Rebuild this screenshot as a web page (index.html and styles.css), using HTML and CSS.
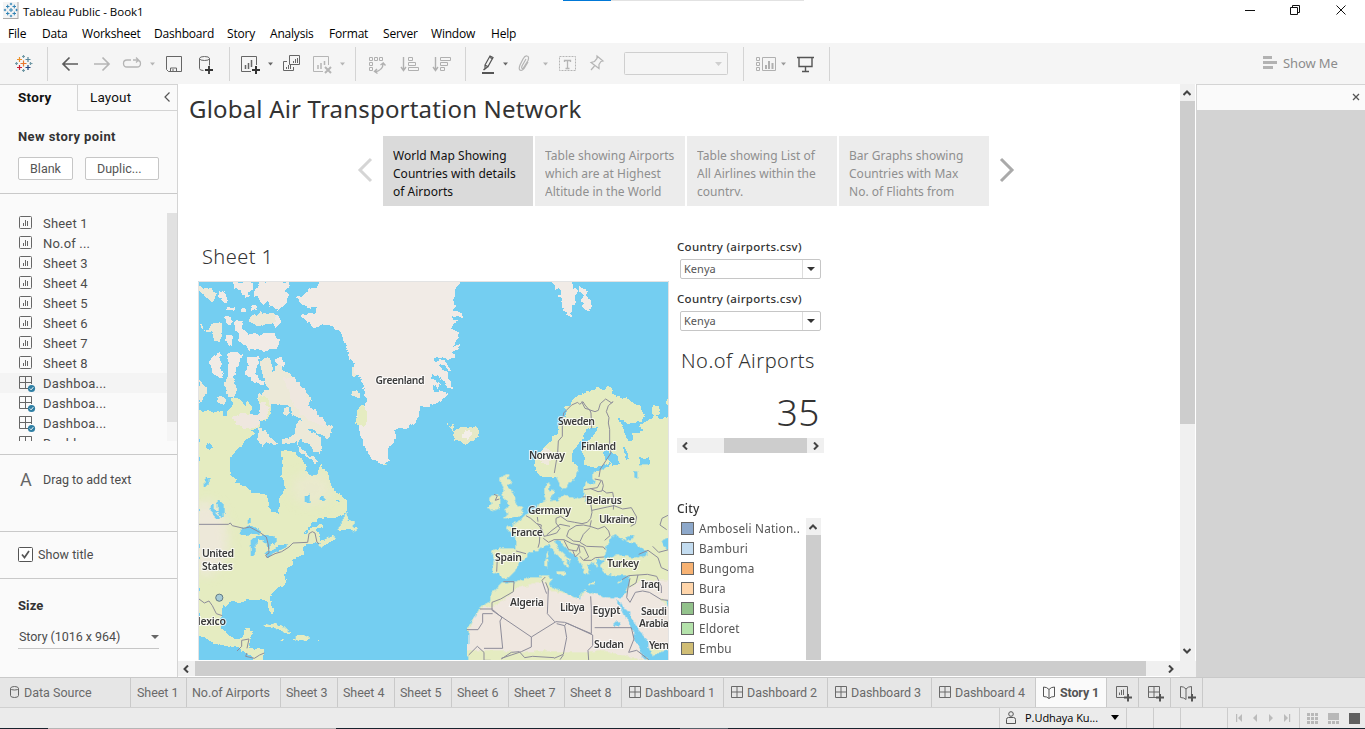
FILE: index.html
```html
<!DOCTYPE html>
<html lang="en">
<head>
<meta charset="utf-8">
<title>Tableau Public - Book1</title>
<link rel="stylesheet" href="styles.css">
</head>
<body>
<svg class="defs" width="0" height="0">
  <defs>
    <symbol id="sheet" viewBox="0 0 14 14"><rect x=".5" y=".5" width="12" height="12" rx="1" fill="none" stroke="currentColor"/><path d="M4.500 7v3M6.500 4v6M8.500 5v5" stroke="currentColor" fill="none"/></symbol>
    <symbol id="grid" viewBox="0 0 14 14"><path d="M.5 .5h11v11H.5zM6 .5v11M.5 6h11" stroke="currentColor" fill="none"/></symbol>
    <symbol id="griddone" viewBox="0 0 17 17"><path d="M9 12.500H.5V.5h12V8M6.500 .5v12M.5 6.500h12" stroke="#666" fill="none"/><circle cx="12.500" cy="12.500" r="3.600" fill="#2e7ea3"/><path d="m10.800 12.500 1.300 1.300 2.200-2.600" stroke="#fff" fill="none"/></symbol>
    <symbol id="book" viewBox="0 0 14 14"><path d="M6 3.500Q4 1 .5 1v9.500q3.500 0 5.500 2 2-2 5.500-2V1Q8 1 6 3.500v9" fill="none" stroke="currentColor"/></symbol>
    <symbol id="chev" viewBox="0 0 8 8"><path d="M6 .5 2.500 4 6 7.500" fill="none" stroke="#444" stroke-width="2"/></symbol>
  </defs>
</svg>
<div class="app">
  <header class="titlebar">
    <div class="progress"></div>
    <svg class="applogo" width="16" height="18" viewBox="0 0 16 18"><rect x="0" y="1" width="15" height="16" fill="#f4f4f4"/><path d="M15 1v17M0 17.500h15" stroke="#aaa" fill="none"/><path d="M6 9h4M8 7v4M3 5.500h3.500M4.700 3.700v3.600M9.500 5.500H13M11.300 3.700v3.600M3 12.500h3.500M4.700 10.700v3.600M9.500 12.500H13M11.300 10.700v3.600M6.800 3h2.400M8 1.800v2.400M6.800 15h2.400M8 13.800v2.400M.8 9h2.400M2 7.800v2.400M12.500 9h2.200M13.500 7.800v2.400" stroke="#3284b5" fill="none"/></svg>
    <span class="wintitle">Tableau Public - Book1</span>
    <svg class="winctl" width="120" height="22" viewBox="1240 0 120 22"><path d="M1245 10.500h10M1290.500 7.500h7v7h-7zM1292.500 7.500v-2h7v7h-2M1336.500 5.500l9 9M1345.500 5.500l-9 9" fill="none" stroke="#111"/></svg>
  </header>
  <nav class="menu"><span class="m1">File</span><span class="m2">Data</span><span class="m3">Worksheet</span><span class="m4">Dashboard</span><span class="m5">Story</span><span class="m6">Analysis</span><span class="m7">Format</span><span class="m8">Server</span><span class="m9">Window</span><span>Help</span></nav>
  <div class="toolbar">
    <svg width="48" height="34" viewBox="0 47 48 34"><g fill="none" stroke-width="1.200"><path d="M20.500 63.500h6M23.500 60.500v6" stroke="#e8762d"/><path d="M17 59.500h5M19.500 57v5" stroke="#eb912c"/><path d="M25.500 59.500h5M28 57v5" stroke="#59879b"/><path d="M17 67.500h5M19.500 65v5" stroke="#c72035"/><path d="M25.500 67.500h5M28 65v5" stroke="#1f447e"/><path d="M22 56.500h3M23.500 55v3M15 63.500h3M16.500 62v3M22 70.500h3M23.500 69v3M29.500 63.500h3M30.500 62v3" stroke="#7199a6"/></g></svg>
    <svg class="sep" width="182" height="34" viewBox="48 47 182 34"><g fill="none" stroke="#5c5c5c" stroke-width="1.700"><path d="M78 64H63M69.500 57.500 63 64l6.500 6.500"/><path d="M94 64h15M102.500 57.500 109 64l-6.500 6.500" stroke="#b5b5b5"/></g><path d="M131 60h-4q-3.500 0-3.500 3.500T127 67h10q3.500 0 3.500-3.500 0-3-3.500-3.500h-4M136 57.500l2.500 2.500-2.500 2.500" stroke="#b5b5b5" fill="none" stroke-width="1.300"/><path d="M150 62.500h5l-2.500 3z" fill="#b5b5b5"/><path d="M166.500 56.500h15v15h-13l-2-2zM170.500 71v-3h6v3M173 71v-2" fill="none" stroke="#666"/><g fill="none" stroke="#666"><ellipse cx="204.500" cy="58.500" rx="5" ry="2"/><path d="M199.500 58.500v10q0 2 4 2M209.500 58.500v7"/><path d="M205 70h8M209 66v8" stroke="#333" stroke-width="1.800"/></g></svg>
    <svg class="sep" width="126" height="34" viewBox="230 47 126 34"><g fill="none" stroke="#666"><path d="M251 71.500h-9.500v-15h15V65"/><path d="M245.500 69v-4M248.500 69v-6M251.500 67v-7" stroke-width="1.500"/><path d="M252 70h8M256 66v8" stroke="#333" stroke-width="2"/><path d="M289.500 55.500h10v9h-10zM287 61.500h-3.500v9h10V67M293.500 63v-2M295.500 63v-4M297.500 63v-5M286.500 69v-2M288.500 69v-4M290.500 69v-4"/></g><path d="M268 62.500h5l-2.500 3z" fill="#666"/><g fill="none" stroke="#b5b5b5"><path d="M323 71.500h-9.500v-15h15V65"/><path d="M318 69v-4M321 69v-6M324.500 65v-4" stroke-width="1.500"/><path d="m325 67 6 6M331 67l-6 6" stroke-width="2"/></g><path d="M340 62.500h5l-2.500 3z" fill="#b5b5b5"/></svg>
    <svg class="sep" width="110" height="34" viewBox="356 47 110 34"><g fill="none" stroke="#b0b0b0"><path d="M369.500 57.500h3v3h-3zM374.500 57.500h3v3h-3zM379.500 57.500h3v3h-3zM369.500 62.500h3v3h-3zM369.500 67.500h3v3h-3z"/><path d="M383 64q0 6-8 8M380.500 65l2.700-2 2.300 2.500M377 69l-2.500 2.500 3 2" stroke-width="1.400"/><path d="M403.500 57v13M401 67l2.500 3.500 2.500-3.500M435.500 57v13M433 67l2.500 3.500 2.500-3.500" stroke-width="1.400"/><path d="M408.500 57.500h4v3h-4zM408.500 62.500h7v3h-7zM408.500 67.500h10v3h-10zM440.500 57.500h10v3h-10zM440.500 62.500h7v3h-7zM440.500 67.500h4v3h-4z"/></g></svg>
    <svg class="sep" width="278" height="34" viewBox="466 47 278 34"><path d="M482 73h12" stroke="#555" stroke-width="2"/><path d="m485 65 5-9 3 1.500-5 9-3 2.500zM485 65l3.500 2M490 57.500l3 1.500M483.500 70l2-2" fill="none" stroke="#555" stroke-width="1.200"/><path d="M503 62.500h5l-2.500 3z" fill="#666"/><path d="m526 59-4 7q-1 3 1 2.500l5-8q1.500-4-1-4.500-2-.5-4 3l-3 6q-2 5 1 5.500 2 0 4-3.500l3-5" fill="none" stroke="#b5b5b5" stroke-width="1.200"/><path d="M543 62.500h5l-2.500 3z" fill="#b5b5b5"/><path d="M559.500 56.500h16v14h-16z" fill="none" stroke="#b5b5b5" stroke-dasharray="2 1"/><path d="M564.500 62v-1.500h6V62M567.500 60.500v8M565.500 68.500h4" fill="none" stroke="#b5b5b5" stroke-width="1.300"/><path d="m597 56 6 5-2 .5-2 3v4l-8-6 3.500-1 2.500-3zM594.500 66l-3.500 4" fill="none" stroke="#b5b5b5" stroke-width="1.200"/><rect x="624.500" y="52.500" width="103" height="22" rx="1" fill="none" stroke="#cfcfcf"/><path d="M715 62h7l-3.500 4z" fill="#cfcfcf"/></svg>
    <svg class="sep last" width="85" height="34" viewBox="744 47 85 34"><g fill="none" stroke="#b0b0b0"><path d="M756.500 57.500h3v3h-3zM756.500 62.500h3v3h-3zM756.500 67.500h3v3h-3zM762.500 57.500h13v13h-13z"/><path d="M766 69v-4M769 69v-8M772.500 69v-6" stroke-width="2"/></g><path d="M781 62.500h5l-2.500 3z" fill="#999"/><path d="M797 57.500h17M799 58v8.500h13V58M805.500 67v5M802 71.500h7" fill="none" stroke="#555" stroke-width="1.400"/></svg>
    <div class="showme"><svg width="16" height="16" viewBox="0 0 16 16"><path d="M1 1h9v3H1zM1 6h14v3H1zM1 11h10v3H1z" fill="#b2b2b2"/></svg><span>Show Me</span></div>
  </div>

  <main class="body">
    <aside class="side">
      <div class="sidetabs"><b>Story</b><div class="layout"><span>Layout</span><svg width="8" height="10" viewBox="0 0 8 10"><path d="M6.500 .5 2 5l4.500 4.500" fill="none" stroke="#555" stroke-width="1.200"/></svg></div></div>
      <section class="newpoint"><h3>New story point</h3><div class="btns"><button class="blank">Blank</button><button class="dup">Duplic...</button></div></section>
      <section class="sheets">
        <ul>
          <li><svg><use href="#sheet"/></svg><span>Sheet 1</span></li><li><svg><use href="#sheet"/></svg><span>No.of ...</span></li><li><svg><use href="#sheet"/></svg><span>Sheet 3</span></li><li><svg><use href="#sheet"/></svg><span>Sheet 4</span></li><li><svg><use href="#sheet"/></svg><span>Sheet 5</span></li><li><svg><use href="#sheet"/></svg><span>Sheet 6</span></li><li><svg><use href="#sheet"/></svg><span>Sheet 7</span></li><li><svg><use href="#sheet"/></svg><span>Sheet 8</span></li>
          <li class="dash hot"><svg><use href="#griddone"/></svg><span>Dashboa...</span></li><li class="dash"><svg><use href="#griddone"/></svg><span>Dashboa...</span></li><li class="dash"><svg><use href="#griddone"/></svg><span>Dashboa...</span></li><li class="dash"><svg><use href="#griddone"/></svg><span>Dashboa...</span></li>
        </ul>
        <div class="listbar"></div>
      </section>
      <section class="drag"><span class="bigA">A</span><span>Drag to add text</span></section>
      <section class="showtitle"><svg width="15" height="15" viewBox="0 0 15 15"><rect x=".5" y=".5" width="14" height="14" rx="1" fill="#fff" stroke="#555"/><path d="m4 7.500 2.500 3 4.500-6.500" fill="none" stroke="#555" stroke-width="1.700"/></svg><span>Show title</span></section>
      <section class="size"><h3>Size</h3><div class="sizesel"><span>Story (1016 x 964)</span><i class="tri"></i></div></section>
    </aside>

    <div class="work">
      <div class="canvas">
        <h1>Global Air Transportation Network</h1>
        <div class="points">
          <svg class="prev" width="18" height="26" viewBox="0 0 18 26"><path d="M15 2 4 13l11 11" fill="none" stroke="#d5d5d5" stroke-width="3"/></svg>
          <div class="pt on"><p>World Map Showing<br>Countries with details<br>of Airports</p></div><div class="pt"><p>Table showing Airports<br>which are at Highest<br>Altitude in the World</p></div><div class="pt"><p>Table showing List of<br>All Airlines within the<br>country.</p></div><div class="pt"><p>Bar Graphs showing<br>Countries with Max<br>No. of Flights from</p></div>
          <svg class="next" width="18" height="26" viewBox="0 0 18 26"><path d="M3 2l11 11L3 24" fill="none" stroke="#aaa" stroke-width="3"/></svg>
        </div>
        <div class="dashboard">
          <div class="viz">
            <h2>Sheet 1</h2>
            <svg class="map" width="471" height="379" viewBox="198 281 471 379">
              <defs>
                <filter id="soft" x="-30%" y="-30%" width="160%" height="160%"><feGaussianBlur stdDeviation="16"/></filter>
                <filter id="coast" x="0" y="0" width="100%" height="100%"><feTurbulence type="fractalNoise" baseFrequency=".16" numOctaves="2" seed="4"/><feDisplacementMap in="SourceGraphic" scale="5" xChannelSelector="R" yChannelSelector="G"/></filter>
                <path id="na" d="M12 0H105V30L122 40 124 54 150 62 170 80 200 88 218 90 220 120 230 128 232 140 248 146 252 120 248 100 262 88 272 70 268 40 256 36 262 20 260-20 258-40 270-45 300-35 330-5 335 20 350 32 365 30 372 10 378-5 385 8 400 30 408 60 420 80 440 92 458 108 460 135 445 148 420 158 370 160 345 180 326 205 345 190 380 178 382 188 362 192 370 205 380 222 400 226 416 214 418 220 395 238 375 248 370 240 378 232 355 236 340 236 325 246 325 268 300 280 290 300 275 310 278 325 270 325 272 350 255 366 235 380 225 395 226 408 236 430 236 452 224 440 216 410 205 404 190 402 180 406 150 404 150 412 110 408 90 420 80 440 76 465 82 490 100 510 120 522 140 520 146 500 160 492 176 496 165 520 162 548 180 552 208 553 204 590 178 585 170 570 150 562 130 546 90 546 60 536 30 520 12 510z"/>
                <clipPath id="naclip"><use href="#na"/></clipPath>
              </defs>
              <rect x="198" y="281" width="471" height="379" fill="#74cef1"/>
              <g filter="url(#coast)"><g transform="translate(195 275) scale(.33333)" shape-rendering="crispEdges">
                <g fill="#f1ebe6">
                  <path d="M375 20L367 35 345 45 322 60 306 70 312 82 330 92 345 98 368 95 366 112 345 116 320 122 330 135 345 146 355 160 385 150 410 152 425 162 440 178 448 205 460 225 462 255 476 262 470 290 484 300 500 308 498 325 508 345 518 375 510 392 495 398 484 420 486 448 494 470 502 500 515 525 530 550 550 560 572 574 578 560 580 520 598 500 600 470 612 460 640 458 655 445 672 425 674 395 690 395 712 390 735 378 760 355 735 345 715 352 712 330 730 340 735 325 712 310 712 295 740 310 755 335 770 340 765 310 750 290 735 270 740 262 760 290 768 290 758 268 740 255 720 262 715 252 740 248 755 256 780 252 780 238 768 232 792 222 795 208 775 212 782 200 790 192 790 172 770 160 770 150 788 140 770 125 803 128 800 116 775 105 785 92 772 88 780 60 780 40 795 25 790 15 375 15z"/>
                  <path d="M1072 15L1082 42 1092 40 1096 62 1086 66 1102 68 1098 86 1106 98 1103 108 1114 114 1126 130 1132 100 1138 84 1140 60 1152 50 1134 36 1130 15zM1146 28L1162 40 1172 42 1180 70 1192 94 1184 108 1166 104 1160 94 1170 84 1158 74 1166 58 1156 50z"/>
                  <path d="M114 22L118 40 140 42 138 56 150 58 148 70 162 64 158 50 170 46 172 34 166 20zM190 20L196 32 178 44 176 66 190 60 194 80 206 94 218 78 224 90 236 98 250 108 262 92 276 78 282 56 272 48 284 34 280 20zM225 140L230 118 252 125 256 140 242 155z"/>
                  <path d="M75 46l10 6 12 8 4 18-14 10-10-18-8-4zM90 98l28-2 0 8-28-2zM140 100h9v12h-7zM166 92l18-2 4 14-20 6zM88 126l18 2 10 12-6 4-6 8-12-12zM118 142l12-6 12 4 2 22 10 6 6 12 20-2 16 4 10-8 20 2 14-2 2 12 10 6-6 28-22 4-20 4-14-6-10 4-22-2-14-16-14-14 2-18-12-6zM90 190l12-10 10 10 0 18-12 4-8-10zM98 234l20-4 26 8-6 16-4 18-14 4 2 20-8 8 2 18-18-10 2-40-6-20zM48 248l22-14 12 8-8 8 8 18-4 14 10 8-6 16-8 10-6-8-12-12-4-16-8-4zM160 250l16-8 16 2-4 18-4 36 4 14 20 8-2 12-24-8-8-2-8-14-14-10 0-18zM240 246l18 0 12 22-10 8-14-10-8-8z"/>
                </g>
                <g fill="#ece9d8">
                  <path d="M12 30l10 12 22-4 18 18-8 30-20-20-22-20zM166 122l18-2 16-8 20 8 12-6 10 12-6 22-20-4-12 8-28-2-14-10zM12 140l14 10 2 14 20-4-2-14 32-2-2 56-18-2-6-30-14 6-12-14zM12 310l8 16 18 14-2 16-16 24-8 2zM70 366l10-4 14 10-2 10-10 6-16-6zM98 300L118 318 126 345 118 368 98 360 90 330z"/>
                  <path d="M194 262l12-14 18 2 8 20 0 20 16-18 8-2 14 20 14 0 4 14 14 12 16 12 8 14 8 12 12 8 2 16-12 8 12 14-6 8 14 6 2 14 16 10 14-2 8 14 6-4 14 10-12 18-8 20-12-16-18-2-16-16-16-6-10-12-10-12-22-12-2-16-18-16-22 2 4 8-12-8-20 4-18-10-10 4-8-14 6-16 8 2 6-10 16-4-4-12-10-12z"/>
                  <path d="M310 430l10 18 10-10 16 14-4 14 16 10 20 12 2 32-4 14-18-6-18-20-10-8-6-12-14 4-4 14 14 16 16 4 2 12 18 8 14 14-8 4-24-16-24-20-12-26-20 4-22-2 2-12 26-6 14-12zM190 456l14 14 12-2 10 18 24 20-10 6-18-8-10-2-12 14-14-28zM268 400l14-2 4 12-8 14-10-6zM474 346l10 0 8 10 4 12-12 2-12-8zM470 275L484 300 478 310 468 295z"/>
                </g>
                <path fill="#efe7df" d="M265 310l35 0 30 30 15 60 40 28 5 28-20-8-34-18-36-30-20-50z"/>
                <path fill="#e5ecc1" d="M495 392l16-2 6 20 0 30-14 12-18-4-2-20z"/>
                <path fill="#e6e9c6" d="M755 446l8 8 10-6 4 8-4 10 8 0 10-8 16 2 16-2 16-4 10 6 6 14-6 12-14 8-12 8-16 4-12-8-14-4-8-14 6-10-4-8-16-8z"/>
                <path fill="#f3eee8" d="M800 475l22-10 12 12-14 14-18-2z"/>
                <path fill="#e5ecc1" d="M12 404L50 412 80 408 88 424 100 420 98 408 112 392 108 372 120 366 142 378 150 400 156 376 168 392 166 416 190 420 196 400 190 368 206 360 220 372 226 410 218 432 200 438 190 455 170 464 178 478 160 490 130 520 112 540 105 560V605H12z"/>
                <path fill="#efe7df" d="M112 425L140 415 166 416 190 420 196 385 210 375 222 400 216 430 200 436 185 455 150 462 125 450z"/>
                <g transform="translate(0 570)">
                  <use href="#na" fill="#e5ecc1"/>
                  <g clip-path="url(#naclip)"><g filter="url(#soft)" fill="#efe7df"><ellipse cx="30" cy="220" rx="70" ry="110" opacity=".8"/><ellipse cx="350" cy="70" rx="60" ry="50" opacity=".4"/></g></g>
                  <path fill="#e5ecc1" d="M202 482l14-4 8 6-16 4zM222 478l20-4 22 10 14 12 10 8-18 0-6-8-16-6-14-6-14 2zM306 510h22l16 10-14 8-18-4-8-2zM258 522h8v3h-8zM296 522h8v4h-8zM360 522h10v3h-10zM432 194L442 170 450 148 460 142 456 168 476 172 472 184 488 186 484 200 468 192 450 196zM370 238L392 222 416 212 420 218 396 236 374 250zM568 0h8v4h-8zM312 582h8v4h-8z"/>
                  <path fill="#74cef1" d="M28 48l6-12 12 4-10 22-10 6zM46 120l12 2 2 14 12 4-6-26 4-10 12 8 8 20-4 22-8 4-8-18-6 4 12 16-8 4-16-22-12-12zM156 164l6-6 6 4 0 10-12 4zM130 208L145 190 160 180 175 184 200 200 194 212 178 204 150 210zM172 224L184 216 208 210 240 214 242 234 226 240 224 250 214 240 204 226 188 226 182 250 180 270 168 274 166 250zM208 272L220 262 240 252 246 242 278 238 278 246 250 258 220 276zM328 92l16-4 2 26-16-2zM374 100l10-6 10 12-20 2zM420 110l14-6-2 8z"/>
                </g>
                <path fill="#74cef1" d="M36 510l10-6 8 10-10 12-8-6z"/>
                <g transform="translate(705 0)">
                  <path fill="#e5ecc1" d="M335 605L318 590 315 555 325 535 345 515 360 500 375 480 385 460 395 440 405 415 412 405 400 396 425 390 425 375 445 362 465 355 470 345 490 350 500 335 520 345 535 332 548 345 545 355 570 365 600 375 630 395 642 420 635 440 600 445 570 430 562 430 580 460 585 480 600 500 612 495 605 475 625 475 640 465 630 450 650 440 668 430 672 418 690 432 705 430 725 410V605zM670 395L685 393 690 405 685 422 670 418zM708 375L725 368V392L710 388z"/>
                  <path fill="#74cef1" d="M470 460L500 458 498 475 480 490 465 505 462 520 465 570 490 578 520 570 545 562 522 585 500 590 525 600V610H430L440 575 425 560 425 535 440 510 460 490zM520 530l14-6 12 14 22 8-2 20-18 8-12-16-14-4zM580 515l10 6 2 16 8 14-10 2-8-16zM628 548l26 0 6 14-12 18-22-8z"/>
                  <path fill="#efe9dc" d="M330 530l20-14 14 14-8 40-20-6z"/>
                </g>
                <g transform="translate(705 570)">
                  <path fill="#e5ecc1" d="M525 5L522 14 488 25 486 38 494 50 485 60 468 52 460 70 462 90 440 100 400 92 385 105 365 108 360 98 372 84 366 74 358 80 356 54 345 60 342 88 346 105 325 115 318 128 300 145 285 152 270 165 250 178 240 185 228 180 226 192 248 200 258 215 255 250 190 252 185 262 192 280 186 322 206 325 215 340 235 338 255 320 265 295 290 275 295 262 325 258 345 240 358 240 372 260 395 285 412 310 418 300 405 285 425 290 400 268 385 250 375 228 385 222 400 240 420 260 440 275 455 300 465 320 475 330 480 315 470 300 500 285 515 285 520 290 510 300 520 325 545 330 560 335 580 330 600 335 598 360 580 395 545 400 500 388 490 385 465 376 452 386 450 402 425 395 400 380 375 370 360 360 365 345 355 330 340 332 300 335 255 350 230 355 216 350 200 370 182 385 180 410 150 425 135 450 112 490 118 520 112 550 115 595 725 595V-5z"/>
                  <path fill="#e5ecc1" d="M316 0L330 32 350 35 360 15 378 10 375 30 385 50 395 72 410 70 415 50 435 45 445 15 430 0zM206 42L220 30 240 28 232 42 246 50 232 66 248 84 256 110 264 124 280 130 274 150 250 156 220 160 236 144 224 138 236 118 218 92 220 74zM180 100L196 86 212 98 208 128 188 138 174 132 184 116zM380 320l26 0-4 12-24-8zM346 286l8-4 0 24-8-2zM348 264l6-4-2 18-6 2zM476 352h20v5h-20zM560 352l16-4-8 8zM490 290h8l8 14-10 2z"/>
                  <path fill="#efe7e0" d="M240 392L255 368 300 362 345 348 352 376 400 384 425 397 450 402 465 378 490 387 545 400 580 395 604 362 640 345 725 345V560L660 575 640 585 560 566 520 556 470 566 400 562 330 556 270 562 205 556 112 556 118 490 135 450 155 428 190 424z"/>
                  <path fill="#e5ecc1" d="M590 440l16 10 10 40 34 60 40 0 30 20v20h-60l-20-40-30-50zM690 395l30 20v10l-26-14z"/>
                  <path fill="#74cef1" d="M562 405L572 415 580 428 600 440 606 458 620 486 646 520 656 530 656 550 668 570 725 552V600H664L656 588 634 570 618 530 606 492 586 458 572 432zM552 480l10-12 8 0-2 18-8-4-8 6zM706 405h15v18h-8z"/>
                  <path fill="#74cef1" d="M462 105l6-14 4 4-6 14zM610 20l14 4-4 14-10-6zM694 226L725 214V262L704 248zM528 244L545 215 560 207 570 222 586 228 600 232 620 238 650 258 648 272 625 280 590 275 560 268 540 282 518 278 528 262zM590 216l26-10-4 14-20 6zM505 284h18v5h-18z"/>
                </g>
              </g></g>
              <g transform="translate(195 275) scale(.33333)">
                <g fill="none" stroke="#8d8c99" stroke-width="3">
                  <path d="M12 748h88l6-4 6 8 34 8 18-4 30 16 20 14 6 24 2 24-10 6 4 8 24-12 20-6 22-14 12-12 44-2 4-26 10-6 8 4 6 28 6 4M12 972l16 12 14-6 10 14 12 24 18 6M126 1128l14-14 0-18 22-4-6 28M156 1134l-4 10 26 6 16-10 14-6"/>
                  <path d="M1078 594l10-60 2-36 12-14 0-40 4-30 24-24 18-8 6 6 10-8 6 10 12 14 18 6 10-4 6-20 16-14 18 12 4-4-14 12-6 18 8 18-2 16 4 20 0 50 4 20-16 24-16 24-4 24"/>
                  <path d="M1160 380l10 20 14 4 4 10 2 46"/>
                  <g transform="translate(705 570)">
                    <path d="M192 88l10 4-6 14 12-4M288 152l14 8 18 16 14 4-4 24-2 30-4 14M258 258l30 8M322 156l2 14M322 176l14 18 6 20 18-4 20-6 10-14-12-16 0-14 14-6 20 14 22 4 22 4 16-4 10-12 4-18-4-28-10-20-14 2M480 70l24 10 12-2 4-16-4-16M462 74l40-6 12-22-20-4M516 74l14 10 18-2 4 22-2 30M486 136l46-10 20-4 26 10 26-4 16 28-4 20-14 8M484 166l-4 18 24 8 20-8 12 14 4 14-16 14M480 188l-20 20-10 22-20-2-20-14 6-18 22-14 22-2 20 4M350 210l16-14 24-18 30 6M340 220l16 12 16-8 30 0 24 12 20 4 4 22-14 14-8-20M402 226l14 28 24 4 8-20M450 232l20 12 50 2 6 8M442 240l20 6 14 30-16 10-10-12M462 286l22 0 12-8 26-2M202 280l-2 40M346 336l-10 10 10 30 4 10"/>
                    <path d="M626 268l28-12 30 22 10 30 22 10M668 244l18 18 30-8M576 344l20-12 56-4 28 6 14 30 0 20M600 340l-6 28-4 30 10 14 16-30 22-4 20 4 36 22 22 2M624 330l-6 24-20 12M716 150l-20 10-6 20 20 14"/>
                    <path d="M220 350l32 0-2 30-38 22-26 10 0 24 118 80 74-46 26 2 80 34 0-76-2-36M188 432h-38M188 446h-30v26l-14 22h-34M188 434l28 24-6 10 8 82h-56M304 516l0 30-30 14-60 20M374 470l-22-24 3-74-8-20M380 476l24 6 6 36-10 50-28 12M404 482l6-8 78 36 0 32-14 14 2 30M494 488h110M604 488l8 34-16 40 24-6 36 28M116 570l26-26 20 18 0 24 20 0M214 582l30-20 24-2 16 18 24-4 64 4M400 570l-10 14"/>
                  </g>
                </g>
              </g>
              <circle cx="219.300" cy="597.700" r="3.600" fill="#a6cbd6" stroke="#637a83"/>
              <g class="lbl"><text x="375.500" y="384" textLength="49">Greenland</text><text x="558" y="424.500" textLength="37">Sweden</text><text x="581" y="449.500" textLength="35">Finland</text><text x="529" y="458.500" textLength="36">Norway</text><text x="586" y="504" textLength="36">Belarus</text><text x="528" y="513.500" textLength="43">Germany</text><text x="599" y="523" textLength="36">Ukraine</text><text x="511" y="535.500" textLength="32">France</text><text x="495" y="561" textLength="27">Spain</text><text x="607" y="567" textLength="32">Turkey</text><text x="641" y="588" textLength="19">Iraq</text><text x="510" y="606" textLength="34">Algeria</text><text x="560" y="610.500" textLength="25">Libya</text><text x="592.500" y="614" textLength="28">Egypt</text><text x="641" y="614.500" textLength="26">Saudi</text><text x="639" y="627" textLength="30">Arabia</text><text x="594" y="648" textLength="30">Sudan</text><text x="649" y="648.500" textLength="20">Yem</text><text x="202" y="557" textLength="32">United</text><text x="202" y="569.500" textLength="31">States</text><text x="191" y="625" textLength="35">Mexico</text></g>
              <path d="M198.500 660V281.500H668.500V660" fill="none" stroke="#e3e3e3"/>
            </svg>
          </div>
          <div class="controls">
            <label>Country (airports.csv)</label><div class="select"><span>Kenya</span><i class="tri dark"></i></div>
            <label>Country (airports.csv)</label><div class="select"><span>Kenya</span><i class="tri dark"></i></div>
            <h2 class="kpi">No.of Airports</h2>
            <div class="num">35</div>
            <div class="mini"><svg width="8" height="8"><use href="#chev"/></svg><div class="minithumb"></div><svg class="flip" width="8" height="8"><use href="#chev"/></svg></div>
            <div class="city">City</div>
            <div class="legend">
              <ul><li><i class="c1"></i><span>Amboseli Nation..</span></li><li><i class="c2"></i><span>Bamburi</span></li><li><i class="c3"></i><span>Bungoma</span></li><li><i class="c4"></i><span>Bura</span></li><li><i class="c5"></i><span>Busia</span></li><li><i class="c6"></i><span>Eldoret</span></li><li><i class="c7"></i><span>Embu</span></li></ul>
              <div class="legbar"><svg class="up" width="8" height="8"><use href="#chev"/></svg></div>
            </div>
          </div>
        </div>
      </div>
      <div class="vbar"><svg class="up" width="8" height="8"><use href="#chev"/></svg><div class="vthumb"></div><svg class="down" width="8" height="8"><use href="#chev"/></svg></div>
      <div class="hbar"><svg width="8" height="8"><use href="#chev"/></svg><div class="hthumb"></div><svg class="flip" width="8" height="8"><use href="#chev"/></svg></div>
      <div class="corner"></div>
    </div>
    <aside class="right"><div class="righthead"><svg width="8" height="8" viewBox="0 0 8 8"><path d="m1 1 6 6M7 1 1 7" stroke="#555" stroke-width="1.300"/></svg></div></aside>
  </main>

  <footer class="tabs">
    <div class="t0"><svg width="10" height="12" viewBox="0 0 10 12"><path d="M.5 2.500v7q0 2 4 2t4-2v-7q0-2-4-2t-4 2q0 1.500 4 1.500t4-1.500" fill="none" stroke="#666"/></svg>Data Source</div><div class="t1">Sheet 1</div><div class="t2">No.of Airports</div><div class="t3">Sheet 3</div><div class="t3">Sheet 4</div><div class="t3">Sheet 5</div><div class="t3">Sheet 6</div><div class="t4">Sheet 7</div><div class="t3">Sheet 8</div><div class="td t5"><svg><use href="#grid"/></svg>Dashboard 1</div><div class="td"><svg><use href="#grid"/></svg>Dashboard 2</div><div class="td"><svg><use href="#grid"/></svg>Dashboard 3</div><div class="td"><svg><use href="#grid"/></svg>Dashboard 4</div><div class="td active"><svg><use href="#book"/></svg>Story 1</div>
    <div class="add"><svg viewBox="0 0 16 16"><path d="M8 11.500H.5V.5h11V8M3.500 9V6.500M5.500 9V4M7.500 9V3.500" fill="none" stroke="#666"/><path d="M8 11.500h8M12 8v7.500" stroke="#555" stroke-width="2"/></svg></div><div class="add"><svg viewBox="0 0 16 16"><path d="M8 11.500H.5V.5h11V8M6 .5v11M.5 6h11" fill="none" stroke="#666"/><path d="M8 11.500h8M12 8v7.500" stroke="#555" stroke-width="2"/></svg></div><div class="add"><svg viewBox="0 0 16 16"><path d="M6 13.500q-2-2-5.500-2V.5Q4 .5 6 3q2-2.500 5.500-2.500V8M6 3v10.500" fill="none" stroke="#666"/><path d="M8 11.500h8M12 8v7.500" stroke="#555" stroke-width="2"/></svg></div>
  </footer>
  <div class="status">
    <div class="user"><svg width="10" height="13" viewBox="0 0 10 13"><circle cx="5" cy="3" r="2.300" fill="none" stroke="#555"/><path d="M.5 12.500v-4q0-2 2-2h5q2 0 2 2v4z" fill="none" stroke="#555"/></svg><span>P.Udhaya Ku...</span><i class="tri black"></i></div><div class="s1"></div><div class="s1"></div><div class="s2"></div>
    <div class="nav"><svg width="60" height="10" viewBox="1234 0 60 10"><path d="M1242 1v8l-4-4zM1236 1h1.200v8H1236zM1257 1v8l-4-4zM1269 1v8l4-4zM1284 1v8l4-4zM1289 1h1.200v8H1289z" fill="#bbb"/></svg></div>
    <div class="views"><svg width="56" height="12" viewBox="1307 0 56 12"><path d="M1307 1h3v3h-3zM1311 1h3v3h-3zM1315 1h3v3h-3zM1307 5h3v3h-3zM1311 5h3v3h-3zM1315 5h3v3h-3zM1307 9h3v3h-3zM1311 9h3v3h-3zM1315 9h3v3h-3zM1328 1h11v7h-11zM1328 9h3v3h-3zM1332 9h3v3h-3zM1336 9h3v3h-3z" fill="#b8b8b8"/><path d="M1349 1h11v11h-11z" fill="#606060"/></svg></div>
  </div>
  <div class="edge"></div>
</div>
</body>
</html>
```
FILE: styles.css
```css
* { box-sizing: border-box; }
body { margin: 0; background: #fff; font-family: "Open Sans", sans-serif; color: #000; }
h1, h2, h3, p, ul { margin: 0; padding: 0; font-weight: 400; }
ul { list-style: none; }
svg { display: block; flex: none; }
.defs { position: absolute; }
.app { width: 1365px; height: 729px; display: flex; flex-direction: column; overflow: hidden; white-space: nowrap; }

.titlebar { height: 24px; display: flex; align-items: flex-start; position: relative; padding-left: 3px; font-size: 11.5px; line-height: 23px; }
.progress { position: absolute; left: 563px; top: 0; width: 241px; height: 1px; background: linear-gradient(90deg, #0078d7 48px, #e2e2e2 48px); }
.applogo { margin-top: 1px; }
.wintitle { margin-left: 4px; letter-spacing: -.04px; }
.winctl { position: absolute; left: 1240px; top: 0; }
.menu { height: 19px; display: flex; padding-left: 8px; font-size: 12px; line-height: 19px; letter-spacing: -.2px; }
.m1 { width: 34px; } .m2 { width: 40px; } .m3 { width: 72px; } .m4 { width: 73px; } .m5 { width: 43px; }
.m6 { width: 59px; } .m7 { width: 54px; } .m8 { width: 48px; } .m9 { width: 60px; }
.toolbar { height: 41px; background: #f5f5f5; display: flex; align-items: center; }
.toolbar .sep { box-shadow: -1px 0 #d4d4d4; }
.toolbar .last { box-shadow: -1px 0 #d4d4d4, 1px 0 #d4d4d4; }
.showme { margin: -2px 0 0 433px; display: flex; gap: 5px; align-items: center; font: 13px "Noto Sans", sans-serif; letter-spacing: -.1px; color: #8c8c8c; }

.body { height: 593px; display: grid; grid-template-columns: 178px 1018px 169px; }
.side { background: #fafafa; border-right: 1px solid #d4d4d4; color: #4c4c4c; font-family: "Roboto", sans-serif; font-size: 12.5px; display: flex; flex-direction: column; }
.side section { border-bottom: 1px solid #c9c9c9; }
.sidetabs { height: 27px; display: flex; border-top: 1px solid #d4d4d4; color: #111; font-size: 13.5px; line-height: 25px; }
.sidetabs b { width: 77px; padding-left: 18px; font-weight: 700; letter-spacing: .3px; }
.layout { flex: 1; border-left: 1px solid #d4d4d4; border-bottom: 1px solid #d4d4d4; padding: 0 6px 0 12px; display: flex; justify-content: space-between; align-items: center; letter-spacing: .15px; background: #fafafa; }
.layout svg { margin-top: -2px; }
.side h3 { font-size: 13px; font-weight: 700; color: #333; line-height: 16px; letter-spacing: .42px; }
.newpoint { height: 83px; padding: 18px 18px 0; }
.btns { display: flex; gap: 12px; margin-top: 12px; }
button { height: 23px; padding: 0; border: 1px solid #c6c6c6; border-radius: 2px; background: #fff; color: #555; font: 12.5px/19px "Roboto", sans-serif; }
.blank { width: 55px; } .dup { width: 74px; text-align: left; padding-left: 11px; }
.sheets { height: 261px; padding-top: 19px; display: flex; }
.sheets ul { width: 167px; height: 228px; overflow: hidden; }
.sheets li { height: 20px; display: flex; align-items: center; padding-left: 19px; font-size: 13px; line-height: 20px; letter-spacing: .18px; }
.sheets li span { padding-top: 1px; }
.sheets li svg { width: 14px; height: 14px; margin-right: 10px; color: #666; }
.sheets .dash svg { width: 17px; height: 17px; margin: 3px 7px 0 0; }
.sheets .hot { background: #f4f4f4; }
.listbar { width: 10px; height: 228px; background: linear-gradient(#e1e1e1 209px, #f5f5f5 209px); }
.drag { height: 77px; padding: 14px 0 0 20px; display: flex; line-height: 21px; letter-spacing: 0; }
.bigA { width: 23px; font-size: 18px; color: #666; }
.showtitle { height: 47px; padding: 0 0 1px 18px; display: flex; align-items: center; gap: 5px; letter-spacing: .05px; }
.side .size { flex: 1; border: 0; padding: 19px 18px 0; }
.side .size h3 { letter-spacing: .1px; }
.sizesel { margin-top: 11px; height: 24px; border-bottom: 1px solid #c6c6c6; display: flex; align-items: center; justify-content: space-between; padding-left: 1px; letter-spacing: -.05px; }
.tri { border: 4px solid transparent; border-top: 4px solid #666; border-bottom: 0; }

.work { display: grid; grid-template: 577px 16px / 1002px 16px; background: #fff; }
.canvas { height: 576px; overflow: hidden; font-family: "Noto Sans", sans-serif; color: #333; }
.canvas h1 { height: 52px; padding-left: 11px; font-size: 24px; line-height: 50px; letter-spacing: .19px; }
.points { display: flex; gap: 2px; padding-left: 178px; height: 70px; }
.prev { margin: 21px 7px 0 0; } .next { margin: 21px 0 0 7px; }
.pt { width: 150px; background: #ececec; padding: 11px 0 0 10px; font-size: 12px; line-height: 18px; color: #8f8f8f; }
.pt.on { background: #dadada; color: #111; }
.pt p { height: 49px; overflow: hidden; letter-spacing: .02px; }
.dashboard { margin: 28px 0 0 20px; display: grid; grid-template-columns: 479px 147px; }
.viz h2 { height: 47px; padding-left: 4px; font-size: 20px; line-height: 45px; font-weight: 300; letter-spacing: .45px; }
.lbl { font: 600 10.500px "Noto Sans", sans-serif; fill: #3a3a3a; stroke: #fff; stroke-opacity: .75; stroke-width: 2px; paint-order: stroke; }
.controls { font-size: 11.5px; padding-top: 3px; }
.controls label { display: block; font-weight: 500; line-height: 20px; height: 22px; letter-spacing: .3px; }
.select { margin: 0 0 10px 3px; height: 20px; width: 141px; border: 1px solid #c6c6c6; border-radius: 2px; display: flex; align-items: center; font-size: 11px; line-height: 18px; padding-left: 3px; color: #555; letter-spacing: .05px; }
.select span { width: 119px; border-right: 1px solid #ddd; }
.tri.dark { border-top-color: #333; margin-left: 4px; }
.kpi { height: 43px; padding-left: 4px; font-size: 20px; line-height: 39px; font-weight: 300; letter-spacing: .5px; }
.num { height: 54px; width: 143px; text-align: right; font-size: 37px; line-height: 56px; font-weight: 300; letter-spacing: .5px; }
.mini { height: 15px; width: 147px; background: #f0f0f0; display: flex; align-items: center; padding: 0 4px; }
.minithumb { height: 15px; width: 83px; margin: 0 5px 0 35px; background: #cdcdcd; }
.flip { transform: scaleX(-1); } .up { transform: rotate(90deg); } .down { transform: rotate(-90deg); }
.city { margin-top: 46px; height: 19px; line-height: 20px; font-weight: 500; font-size: 12px; letter-spacing: .2px; }
.legend { display: flex; color: #555; }
.legend ul { width: 129px; padding: 0 0 0 4px; }
.legend li { display: flex; align-items: center; height: 20px; font-size: 11.75px; letter-spacing: .2px; }
.legend li i { width: 13px; height: 13px; margin-right: 5px; border: 1px solid #666; }
.legend .c1 { background: #8da8ca; } .legend .c2 { background: #c3dcf0; } .legend .c3 { background: #f7b273; } .legend .c4 { background: #ffd5aa; } .legend .c5 { background: #93c28c; } .legend .c6 { background: #b4e2ab; } .legend .c7 { background: #d0bd75; }
.legbar { width: 15px; height: 150px; background: linear-gradient(#f0f0f0 17px, #cdcdcd 17px); padding: 5px 0 0 3px; }
.vbar { background: #f0f0f0; display: flex; flex-direction: column; align-items: center; width: 15px; padding-top: 5px; }
.vbar svg { margin-right: 1px; }
.vthumb { width: 15px; height: 323px; margin: 4px 0 223px; background: #cdcdcd; flex: none; }
.hbar { background: #f0f0f0; height: 15px; display: flex; align-items: center; padding-left: 4px; }
.hthumb { width: 951px; height: 15px; margin: 0 21px 0 5px; background: #cdcdcd; }
.corner { background: #f0f0f0; }
.right { background: #d3d3d3; border-left: 1px solid #d4d4d4; }
.righthead { height: 26px; background: #fafafa; border-top: 1px solid #d4d4d4; display: flex; align-items: center; justify-content: flex-end; padding: 0 5px 1px 0; }

.tabs { height: 31px; background: #e6e6e6; border-top: 1px solid #c9c9c9; border-bottom: 1px solid #d0d0d0; display: flex; color: #6a6a6a; font: 12.5px/29px "Roboto", sans-serif; }
.tabs > div { border-right: 1px solid #c9c9c9; padding-left: 5px; display: flex; align-items: center; letter-spacing: -.05px; }
.tabs svg { flex: none; }
.tabs .t0 { width: 131px; padding-left: 10px; gap: 4px; letter-spacing: 0; }
.tabs .t0 svg { margin-top: -2px; }
.t1 { width: 56px; } .t2 { width: 94px; } .t3 { width: 57px; } .t4 { width: 56px; }
.tabs .t1 { padding-left: 6px; }
.td { width: 104px; }
.tabs .td { padding-left: 7px; } .tabs .td svg { width: 14px; height: 14px; margin: 0 2px 0 0; } .tabs .t5 { width: 102px; }
.tabs .active { width: 71px; background: #fafafa; font-weight: 700; color: #555; letter-spacing: -.15px; line-height: 28px; }
.tabs .td.active svg { margin: 0 3px 0 0; }
.tabs .add { width: 32px; padding-left: 9px; } .add svg { width: 16px; height: 16px; margin-top: 2px; }
.status { height: 20px; background: #ebebeb; display: flex; padding-left: 999px; }
.status > div { border-left: 1px solid #ccc; display: flex; align-items: center; }
.user { width: 127px; padding: 0 0 2px 6px; font-size: 11px; }
.user span { width: 86px; margin-left: 9px; letter-spacing: -.05px; padding-top: 1px; }
.tri.black { border-top-color: #000; border-width: 5px 4px 0; }
.s1 { width: 27px; } .s2 { width: 47px; }
.nav { width: 72px; padding-left: 6px; } .views { padding-left: 7px; }
.edge { height: 1px; background: linear-gradient(90deg, #18242e 48px, #b5b5b5 48px 336px, #18242e 336px 680px, #56616a 680px 728px, #18242e 728px); }
```
